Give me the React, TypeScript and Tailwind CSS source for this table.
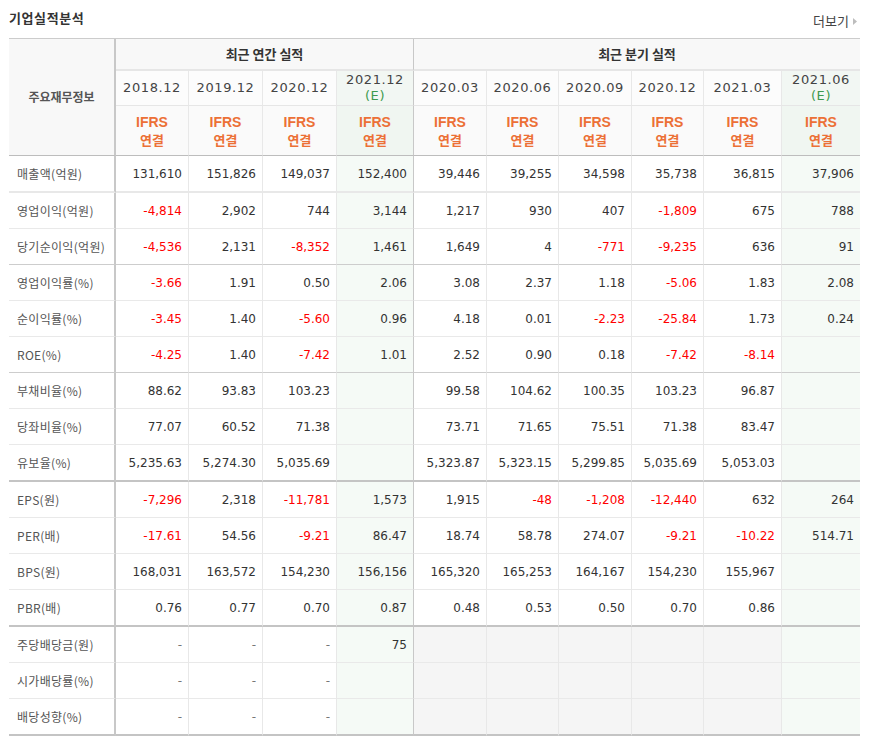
import React from "react";

type Variant = "first" | "thin" | "group" | "thick";

const rows: { label: string; v: Variant; vals: string[] }[] = [
  { label: "매출액(억원)", v: "first", vals: ["131,610", "151,826", "149,037", "152,400", "39,446", "39,255", "34,598", "35,738", "36,815", "37,906"] },
  { label: "영업이익(억원)", v: "thin", vals: ["-4,814", "2,902", "744", "3,144", "1,217", "930", "407", "-1,809", "675", "788"] },
  { label: "당기순이익(억원)", v: "group", vals: ["-4,536", "2,131", "-8,352", "1,461", "1,649", "4", "-771", "-9,235", "636", "91"] },
  { label: "영업이익률(%)", v: "thin", vals: ["-3.66", "1.91", "0.50", "2.06", "3.08", "2.37", "1.18", "-5.06", "1.83", "2.08"] },
  { label: "순이익률(%)", v: "thin", vals: ["-3.45", "1.40", "-5.60", "0.96", "4.18", "0.01", "-2.23", "-25.84", "1.73", "0.24"] },
  { label: "ROE(%)", v: "group", vals: ["-4.25", "1.40", "-7.42", "1.01", "2.52", "0.90", "0.18", "-7.42", "-8.14", ""] },
  { label: "부채비율(%)", v: "thin", vals: ["88.62", "93.83", "103.23", "", "99.58", "104.62", "100.35", "103.23", "96.87", ""] },
  { label: "당좌비율(%)", v: "thin", vals: ["77.07", "60.52", "71.38", "", "73.71", "71.65", "75.51", "71.38", "83.47", ""] },
  { label: "유보율(%)", v: "thick", vals: ["5,235.63", "5,274.30", "5,035.69", "", "5,323.87", "5,323.15", "5,299.85", "5,035.69", "5,053.03", ""] },
  { label: "EPS(원)", v: "thin", vals: ["-7,296", "2,318", "-11,781", "1,573", "1,915", "-48", "-1,208", "-12,440", "632", "264"] },
  { label: "PER(배)", v: "thin", vals: ["-17.61", "54.56", "-9.21", "86.47", "18.74", "58.78", "274.07", "-9.21", "-10.22", "514.71"] },
  { label: "BPS(원)", v: "thin", vals: ["168,031", "163,572", "154,230", "156,156", "165,320", "165,253", "164,167", "154,230", "155,967", ""] },
  { label: "PBR(배)", v: "thick", vals: ["0.76", "0.77", "0.70", "0.87", "0.48", "0.53", "0.50", "0.70", "0.86", ""] },
  { label: "주당배당금(원)", v: "thin", vals: ["-", "-", "-", "75", "", "", "", "", "", ""] },
  { label: "시가배당률(%)", v: "thin", vals: ["-", "-", "-", "", "", "", "", "", "", ""] },
  { label: "배당성향(%)", v: "thick", vals: ["-", "-", "-", "", "", "", "", "", "", ""] },
];

const rowCls: Record<Variant, string> = {
  first: "h-[37px] border-b-2 border-b-[#e8e8e8]",
  thin: "h-[36px] border-b border-b-[#e9e9e9]",
  group: "h-[36px] border-b border-b-[#cdcdcd]",
  thick: "h-[37px] border-b-2 border-b-[#c4c4c4]",
};

const years = ["2018.12", "2019.12", "2020.12", "2021.12", "2020.03", "2020.06", "2020.09", "2020.12", "2021.03", "2021.06"];

const kr = "font-['Noto_Sans_CJK_KR',sans-serif]";
const num = "font-['DejaVu_Sans','Noto_Sans_CJK_KR',sans-serif]";

function colCls(i: number, gray: boolean) {
  if (i === 3) return "border-r border-r-[#c8c8c8] bg-[#f5faf6]";
  if (i === 9) return "bg-[#f5faf6]";
  if (gray) return "border-r border-r-[#e8e8e8] bg-[#f5f5f5]";
  return "border-r border-r-[#e8e8e8] bg-white";
}

function hdrCol(i: number, e: string, n: string) {
  if (i === 3) return `border-r border-r-[#c8c8c8] ${e}`;
  if (i === 9) return e;
  return `border-r border-r-[#e8e8e8] ${n}`;
}

export default function App() {
  return (
    <div className="w-[870px] bg-white pl-[9px] pr-[10px]">
      <div className="flex h-[38px] items-start justify-between">
        <div className={`${kr} pt-[8px] text-[13px] font-bold leading-[20px] tracking-[0.6px] text-[#333]`}>기업실적분석</div>
        <div className={`${kr} flex items-center gap-[4px] pr-[3px] pt-[12px] text-[13px] leading-[18px] text-[#444]`}>
          <span>더보기</span>
          <svg width="4" height="7" viewBox="0 0 4 7">
            <path d="M0 0 L4 3.5 L0 7 Z" fill="#bdbdbd" />
          </svg>
        </div>
      </div>
      <div className="grid w-[851px] grid-cols-[107px_73px_74px_74px_77px_73px_72px_73px_72px_78px_78px] border-t border-t-[#cccccc]">
        <div className={`${kr} row-span-3 flex items-center justify-center border-b border-r-2 border-b-[#bdbdbd] border-r-[#c8c8c8] bg-[#f8f8f8] text-[12px] font-bold text-[#555]`}>
          주요재무정보
        </div>
        <div className={`${kr} col-span-4 flex h-[32px] items-center justify-center border-b-2 border-r border-b-[#e6e6e6] border-r-[#c8c8c8] bg-[#f8f8f8] text-[13px] font-bold text-[#333]`}>
          최근 연간 실적
        </div>
        <div className={`${kr} col-span-6 flex h-[32px] items-center justify-center border-b-2 border-b-[#e6e6e6] bg-[#f8f8f8] text-[13px] font-bold text-[#333]`}>
          최근 분기 실적
        </div>
        {years.map((y, i) => {
          const est = i === 3 || i === 9;
          return (
            <div
              key={"y" + i}
              className={`${num} flex h-[35px] flex-col items-center justify-center border-b border-b-[#e6e6e6] text-[13px] leading-[16px] tracking-[0.6px] text-[#444] ${hdrCol(i, "bg-[#f2f7f3]", "bg-[#fcfcfc]")}`}
            >
              <span>{y}</span>
              {est && <span className="text-[#3d9a4e]">(E)</span>}
            </div>
          );
        })}
        {years.map((_, i) => (
          <div
            key={"f" + i}
            className={`flex h-[50px] flex-col items-center justify-center border-b border-b-[#bdbdbd] text-[#ec7036] ${hdrCol(i, "bg-[#f0f6f1]", "bg-[#fafafa]")}`}
          >
            <span className="font-['Liberation_Sans',sans-serif] text-[14px] font-bold leading-[17px]">IFRS</span>
            <span className={`${kr} text-[13px] font-bold leading-[17px]`}>연결</span>
          </div>
        ))}
        {rows.map((r, ri) => (
          <React.Fragment key={r.label}>
            <div className={`${kr} flex items-center border-r-2 border-r-[#c8c8c8] bg-white pl-[8px] text-[12px] tracking-[0.3px] text-[#555] ${rowCls[r.v]}`}>
              {r.label}
            </div>
            {r.vals.map((v, i) => {
              const gray = ri >= 13 && i >= 4 && i <= 8;
              const neg = v.startsWith("-") && v.length > 1;
              const color = neg ? "text-[#ff0000]" : v === "-" ? "text-[#777]" : "text-[#333]";
              return (
                <div
                  key={i}
                  className={`${num} flex items-center justify-end pr-[6px] text-[12px] ${color} ${rowCls[r.v]} ${colCls(i, gray)}`}
                >
                  {v}
                </div>
              );
            })}
          </React.Fragment>
        ))}
      </div>
    </div>
  );
}
